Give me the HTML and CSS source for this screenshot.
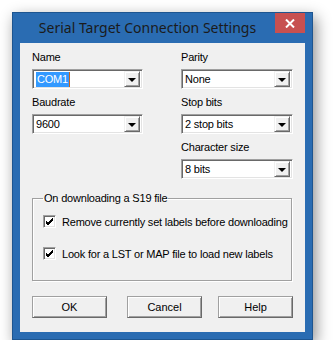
FILE: index.html
```html
<!DOCTYPE html>
<html lang="en">
<head>
    <meta charset="UTF-8">
    <title>Serial Target Connection Settings</title>
    <link rel="stylesheet" href="styles.css">
</head>
<body>
    <div class="window">
        <div class="titlebar">
            <div class="title">Serial Target Connection Settings</div>
            <div class="close">
                <svg width="10" height="9" viewBox="0 0 10 9">
                    <path d="M1 0.5 L9 8.5 M9 0.5 L1 8.5" stroke="#fff" stroke-width="2"/>
                </svg>
            </div>
        </div>

        <div class="client">
            <div class="columns">
                <div class="column">
                    <div class="field">
                        <label>Name</label>
                        <div class="combo">
                            <span class="value"><span class="selected">COM1</span></span>
                            <span class="drop"><span class="arrow"></span></span>
                        </div>
                    </div>
                    <div class="field">
                        <label>Baudrate</label>
                        <div class="combo">
                            <span class="value">9600</span>
                            <span class="drop"><span class="arrow"></span></span>
                        </div>
                    </div>
                </div>

                <div class="column right">
                    <div class="field">
                        <label>Parity</label>
                        <div class="combo">
                            <span class="value">None</span>
                            <span class="drop"><span class="arrow"></span></span>
                        </div>
                    </div>
                    <div class="field">
                        <label>Stop bits</label>
                        <div class="combo">
                            <span class="value">2 stop bits</span>
                            <span class="drop"><span class="arrow"></span></span>
                        </div>
                    </div>
                    <div class="field">
                        <label>Character size</label>
                        <div class="combo">
                            <span class="value">8 bits</span>
                            <span class="drop"><span class="arrow"></span></span>
                        </div>
                    </div>
                </div>
            </div>

            <fieldset class="group">
                <legend>On downloading a S19 file</legend>
                <div class="check-row">
                    <span class="checkbox">
                        <svg width="9" height="9" viewBox="0 0 9 9">
                            <path d="M1 4 L3 6 L8 1 M1 5 L3 7 L8 2 M1 6 L3 8 L8 3" stroke="#000" stroke-width="1" fill="none"/>
                        </svg>
                    </span>
                    <span>Remove currently set labels before downloading</span>
                </div>
                <div class="check-row">
                    <span class="checkbox">
                        <svg width="9" height="9" viewBox="0 0 9 9">
                            <path d="M1 4 L3 6 L8 1 M1 5 L3 7 L8 2 M1 6 L3 8 L8 3" stroke="#000" stroke-width="1" fill="none"/>
                        </svg>
                    </span>
                    <span>Look for a LST or MAP file to load new labels</span>
                </div>
            </fieldset>

            <div class="buttons">
                <button class="ok">OK</button>
                <button class="cancel">Cancel</button>
                <button class="help">Help</button>
            </div>
        </div>
    </div>
</body>
</html>
```

FILE: styles.css
```css
* {
    box-sizing: border-box;
    margin: 0;
    padding: 0;
}

body {
    background: #fff;
    font-family: 'Liberation Sans', Arial, sans-serif;
    font-size: 11px;
    color: #000;
}

.window {
    margin: 12px 0 0 12px;
    width: 301px;
    height: 328px;
    background: #2a6cb2;
    border: 1px solid #1d5590;
    padding: 0 7px 7px 7px;
    box-shadow: 3px 5px 14px rgba(0, 0, 0, 0.45);
}

.titlebar {
    display: flex;
    height: 30px;
}

.title {
    flex: 1;
    text-align: center;
    font-family: 'Noto Sans', sans-serif;
    font-size: 14px;
    line-height: 30px;
    color: #1b1b1b;
}

.close {
    width: 30px;
    height: 20px;
    background: #c75050;
    display: flex;
    justify-content: center;
    align-items: center;
}

.client {
    background: #f0f0f0;
    height: 289px;
    padding: 8px 12px 0 12px;
    letter-spacing: -0.2px;
}

.columns {
    display: flex;
    gap: 38px;
}

.column {
    width: 111px;
    display: flex;
    flex-direction: column;
    gap: 7px;
}

.column.right {
    width: 112px;
}

label {
    display: block;
    height: 13px;
    line-height: 13px;
    margin-bottom: 5px;
}

.combo {
    display: flex;
    height: 20px;
    background: #fff;
    border: 1px solid;
    border-color: #a0a0a0 #fff #fff #a0a0a0;
    box-shadow: inset 1px 1px #696969, inset -1px -1px #e3e3e3;
    padding: 2px 2px 1px 2px;
}

.value {
    flex: 1;
    line-height: 15px;
    padding-left: 1px;
}

.selected {
    display: inline-block;
    background: #3399ff;
    color: #fff;
    padding: 0 1px;
    border-right: 1px solid #c8641e;
}

.drop {
    width: 16px;
    height: 16px;
    margin-top: -1px;
    background: #f0f0f0;
    border: 1px solid;
    border-color: #f0f0f0 #696969 #696969 #f0f0f0;
    box-shadow: inset 1px 1px #fff, inset -1px -1px #a0a0a0;
    display: flex;
    justify-content: center;
    align-items: center;
}

.arrow {
    width: 0;
    height: 0;
    border-left: 4px solid transparent;
    border-right: 4px solid transparent;
    border-top: 4px solid #000;
    margin-top: 1px;
}

.group {
    margin-top: 13px;
    width: 260px;
    height: 89px;
    border: 1px solid #a0a0a0;
    box-shadow: inset 1px 1px #fff, 1px 1px #fff;
    padding: 10px 0 0 10px;
}

.group legend {
    padding: 0 1px;
    line-height: 13px;
}

.check-row {
    display: flex;
    align-items: center;
    gap: 6px;
    height: 13px;
    margin-bottom: 19px;
    white-space: nowrap;
}

.checkbox {
    flex: none;
    width: 13px;
    height: 13px;
    background: #fff;
    border: 1px solid;
    border-color: #a0a0a0 #fff #fff #a0a0a0;
    box-shadow: inset 1px 1px #696969, inset -1px -1px #e3e3e3;
    display: flex;
    justify-content: center;
    align-items: center;
}

.buttons {
    display: flex;
    margin-top: 15px;
}

button {
    width: 75px;
    height: 22px;
    font-family: 'Liberation Sans', Arial, sans-serif;
    font-size: 11px;
    color: #000;
    background: #f0f0f0;
    border: 1px solid;
    border-color: #a0a0a0 #696969 #696969 #a0a0a0;
    box-shadow: inset 1px 1px #fff, inset -1px -1px #a0a0a0;
}

.cancel {
    margin-left: 20px;
}

.help {
    margin-left: 16px;
}
```
